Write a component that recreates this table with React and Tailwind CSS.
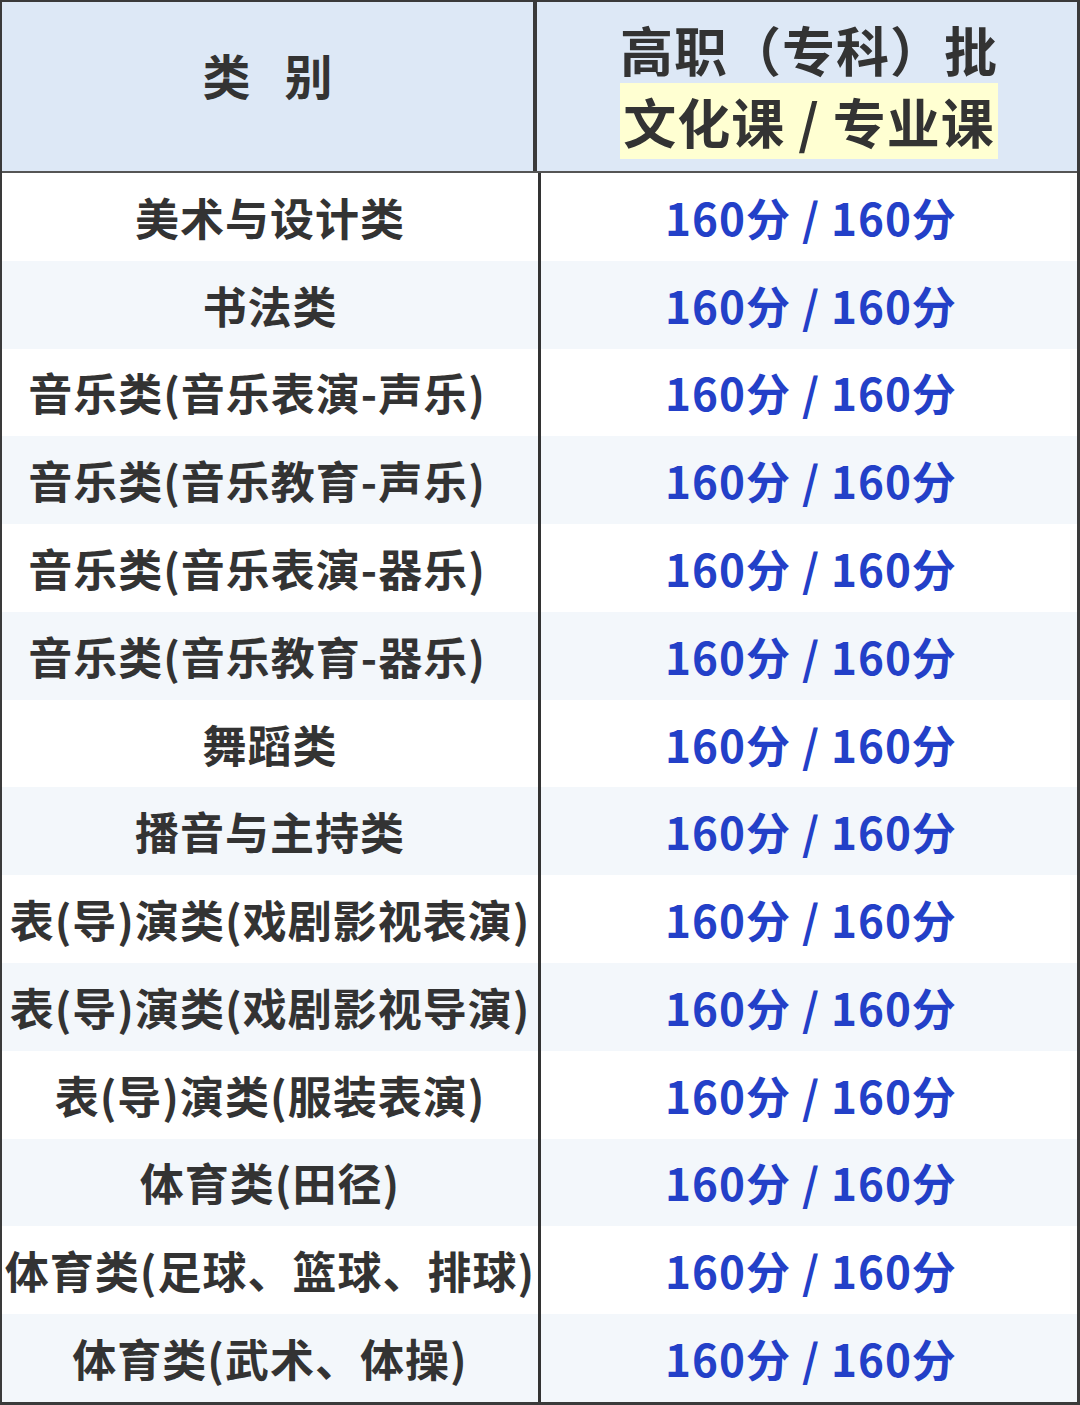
import React from "react";

const rows = [
  { name: "美术与设计类" },
  { name: "书法类" },
  { name: "音乐类(音乐表演-声乐)", shift: true },
  { name: "音乐类(音乐教育-声乐)", shift: true },
  { name: "音乐类(音乐表演-器乐)", shift: true },
  { name: "音乐类(音乐教育-器乐)", shift: true },
  { name: "舞蹈类" },
  { name: "播音与主持类" },
  { name: "表(导)演类(戏剧影视表演)" },
  { name: "表(导)演类(戏剧影视导演)" },
  { name: "表(导)演类(服装表演)" },
  { name: "体育类(田径)" },
  { name: "体育类(足球、篮球、排球)" },
  { name: "体育类(武术、体操)" },
];

const font = { fontFamily: '"Noto Sans CJK SC", "Noto Sans", sans-serif' };

export default function App() {
  return (
    <div
      style={font}
      className="w-[1080px] h-[1405px] flex flex-col bg-white border-t-2 border-l-2 border-r-[3px] border-b-[3px] border-[#3a3a3a] text-[#333333] font-bold"
    >
      {/* Header */}
      <div className="flex h-[171px] bg-[#dde8f6] border-b-2 border-[#555555]">
        <div className="w-[535px] border-r-4 border-[#3a3a3a] flex items-center justify-center gap-[34px] text-[48px] pb-[26px]">
          <span>类</span>
          <span>别</span>
        </div>
        <div className="flex-1 flex flex-col items-center justify-center text-[53px] leading-[72px] tracking-[1px] pb-[4px] pl-[4px]">
          <div>高职（专科）批</div>
          <div>
            <span className="bg-[#ffffd2] px-[3px]">文化课 / 专业课</span>
          </div>
        </div>
      </div>

      {/* Rows */}
      <div className="flex-1 flex flex-col">
        {rows.map((row, i) => (
          <div
            key={row.name}
            className={`flex-1 flex ${i % 2 === 1 ? "bg-[#f3f7fb]" : "bg-white"}`}
          >
            <div
              className={`w-[539px] border-r-[3px] border-[#333333] flex items-center justify-center text-[44px] tracking-[1px] whitespace-nowrap ${
                row.shift ? "pr-[26px]" : ""
              }`}
            >
              {row.name}
            </div>
            <div className="flex-1 flex items-center justify-center text-[44px] text-[#2340c8] tracking-[1px] pl-[4px]">
              160分 / 160分
            </div>
          </div>
        ))}
      </div>
    </div>
  );
}
